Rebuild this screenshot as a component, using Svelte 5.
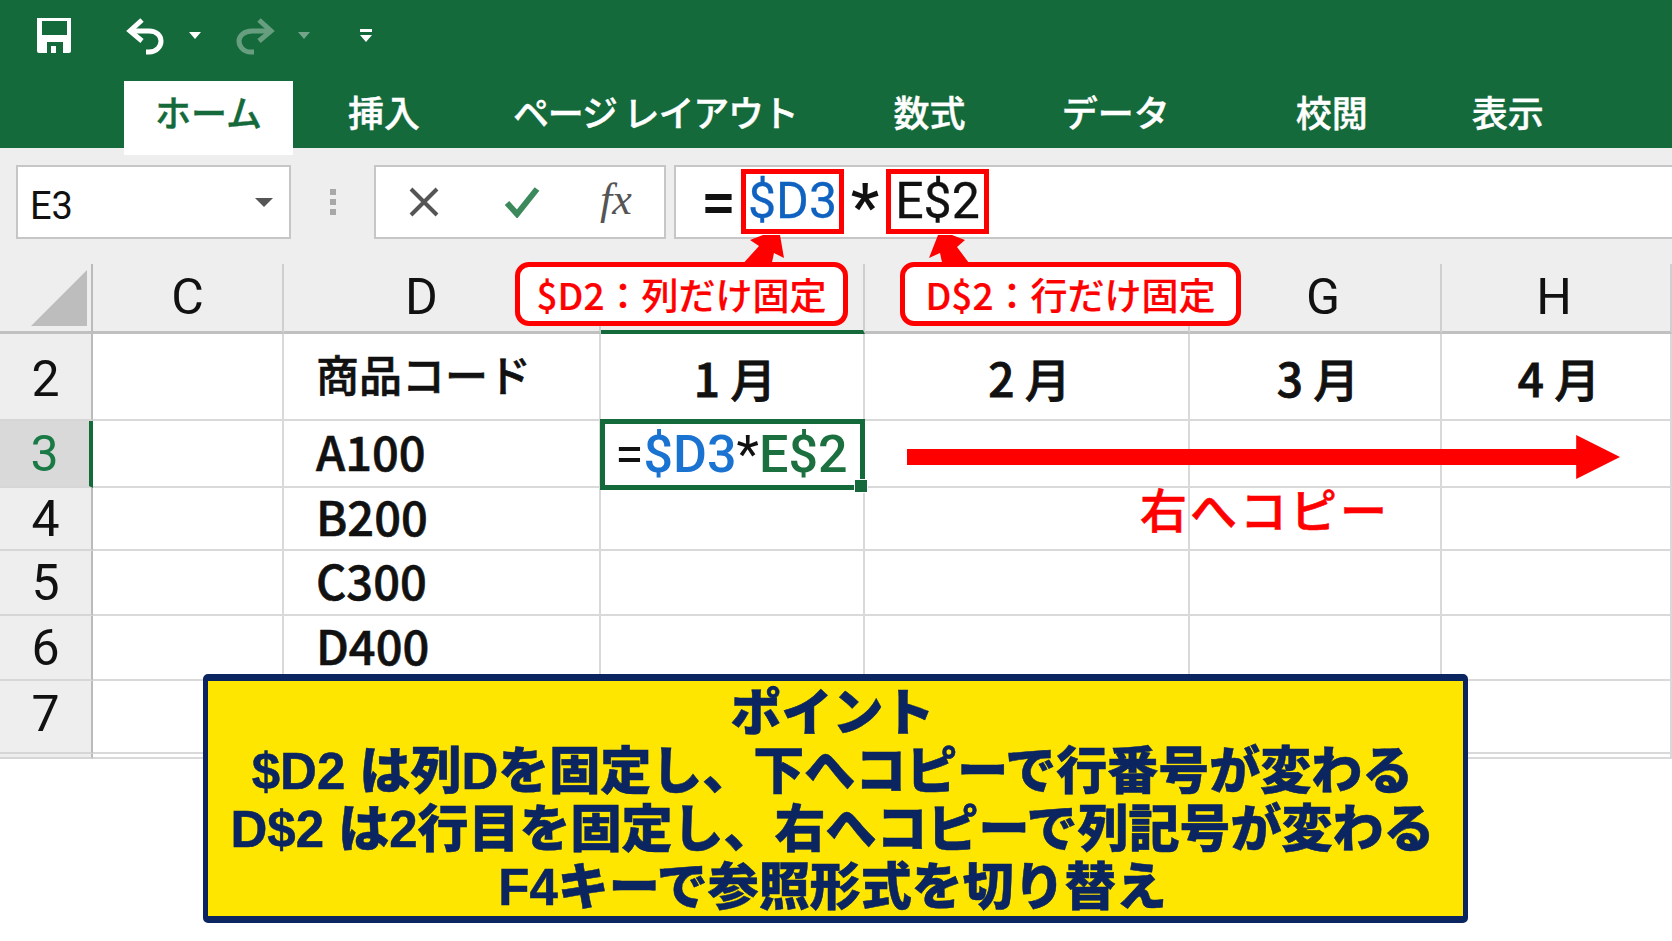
<script lang="ts">
  const tabs = [
    { label: 'ホーム', gap: 0, active: true, ls: 0 },
    { label: '挿入', gap: 55, ls: 0 },
    { label: 'ページ レイアウト', gap: 93, ls: -1.2 },
    { label: '数式', gap: 96, ls: 0 },
    { label: 'データ', gap: 96, ls: 0 },
    { label: '校閲', gap: 126, ls: 0 },
    { label: '表示', gap: 104, ls: 0 },
  ]
  const cols = [
    { label: 'C', shift: 0 },
    { label: 'D', shift: -40 },
    { label: '', shift: 0 },
    { label: '', shift: 0 },
    { label: 'G', shift: 16 },
    { label: 'H', shift: -4 },
  ]
  const rows = [
    { n: 2, code: '商品コード', months: ['1 月', '2 月', '3 月', '4 月'] },
    { n: 3, code: 'A100' },
    { n: 4, code: 'B200' },
    { n: 5, code: 'C300' },
    { n: 6, code: 'D400' },
    { n: 7, code: '' },
    { n: 0, code: '' },
  ]
</script>

<div class="app">
  <div class="ribbon">
    <div class="qat">
      <svg class="save" viewBox="0 0 36 37" width="36" height="37">
        <path fill="#fff" fill-rule="evenodd" d="M1 1h34v33a2 2 0 0 1-2 2H3a2 2 0 0 1-2-2zM6 4v14h25V4zM11 36V25h16v11h-7V29h-5v7z" />
      </svg>
      <svg class="undo" viewBox="0 0 40 38" width="40" height="38" fill="none" stroke="#fff" stroke-width="5">
        <path d="M16 3 4 14l12 10" />
        <path d="M5 14h18c8 0 12 5 12 10s-4 11-12 11h-3" />
      </svg>
      <span class="caret"></span>
      <svg class="redo" viewBox="0 0 40 38" width="40" height="38" fill="none" stroke="#fff" stroke-width="5" opacity=".35">
        <path d="M24 3l12 11-12 10" />
        <path d="M35 14H17C9 14 4 19 4 24s4 11 12 11h3" />
      </svg>
      <span class="caret dim"></span>
      <span class="custom"><i></i><span class="caret"></span></span>
    </div>
    <div class="tabs">
      {#each tabs as t}
        <div class="tab" class:active={t.active} style="margin-left:{t.gap}px; letter-spacing:{t.ls}px">{t.label}</div>
      {/each}
    </div>
  </div>

  <div class="fbar">
    <div class="namebox"><span>E3</span><span class="nb-caret"></span></div>
    <div class="dots"><i></i><i></i><i></i></div>
    <div class="btns">
      <svg viewBox="0 0 32 32" width="32" height="32" fill="none" stroke="#555" stroke-width="4"><path d="M3 3l26 26M29 3 3 29" /></svg>
      <svg viewBox="0 0 36 32" width="36" height="32" fill="none" stroke="#3c8a5c" stroke-width="6"><path d="M3 17l10 11L33 3" /></svg>
      <span class="fx">fx</span>
    </div>
    <div class="formula">
      <span class="eq">=</span>
      <span class="ref blue">$D3</span>
      <span class="star">*</span>
      <span class="ref">E$2</span>
    </div>
  </div>

  <div class="sheet">
    <div class="grid">
      <div class="corner"><svg viewBox="0 0 56 56" width="56" height="56"><path fill="#bdbdbd" d="M56 0v56H0z" /></svg></div>
      {#each cols as c, i}
        <div class="colhead" class:sel={i === 2}><span style="margin-left:{c.shift}px">{c.label}</span></div>
      {/each}
      {#each rows as r}
        <div class="rowhead" class:sel={r.n === 3} class:low={r.n === 2} class:high={r.n === 7}>{r.n || ''}</div>
        <div class="cell"></div>
        <div class="cell code" class:jp={r.n === 2}>{r.code}</div>
        {#if r.months}
          {#each r.months as m}
            <div class="cell month">{m}</div>
          {/each}
        {:else if r.n === 3}
          <div class="cell active-cell">
            <span>=<b class="b">$D3</b>*<b class="g">E$2</b></span>
            <i class="handle"></i>
          </div>
          <div class="cell"></div><div class="cell"></div><div class="cell"></div>
        {:else}
          <div class="cell"></div><div class="cell"></div><div class="cell"></div><div class="cell"></div>
        {/if}
      {/each}
    </div>

    <div class="callout c1">
      <svg viewBox="0 0 46 32" width="46" height="32"><path fill="#f00" d="M23 0h17l4 23-10-5-3 14H0l19-21L10 5z" /></svg>
      $D2：列だけ固定
    </div>
    <div class="callout c2">
      <svg viewBox="0 0 52 32" width="52" height="32"><path fill="#f00" d="M18 0h14l13 5-8 7 15 20H23l-3-14-11 5z" /></svg>
      D$2：行だけ固定
    </div>

    <svg class="arrow" viewBox="0 0 716 44" width="713" height="44"><path fill="#f00" d="M0 14h672V0l44 22-44 22V30H0z" /></svg>
    <div class="copy">右へコピー</div>

    <div class="point">
      <div>ポイント</div>
      <div>$D2 は列Dを固定し、下へコピーで行番号が変わる</div>
      <div>D$2 は2行目を固定し、右へコピーで列記号が変わる</div>
      <div>F4キーで参照形式を切り替え</div>
    </div>
  </div>
</div>

<style>
  :global(body) { margin: 0; background: #fff; }
  .app {
    width: 1672px;
    height: 941px;
    overflow: hidden;
    background: #fff;
    font-family: 'Noto Sans CJK JP', 'Liberation Sans', sans-serif;
    color: #111;
  }

  /* ribbon */
  .ribbon { background: #156a3b; height: 148px; }
  .qat { display: flex; align-items: center; height: 81px; padding-left: 36px; padding-bottom: 10px; box-sizing: border-box; }
  .undo { margin-left: 54px; }
  .redo { margin-left: 34px; }
  .caret { width: 0; height: 0; border: 6px solid transparent; border-top: 7px solid #fff; border-bottom: 0; margin-left: 23px; }
  .caret.dim { opacity: .4; margin-left: 23px; }
  .custom { display: flex; flex-direction: column; align-items: center; gap: 3px; margin-left: 50px; }
  .custom i { width: 12px; height: 3px; background: #fff; }
  .custom .caret { margin-left: 0; }
  .tabs { display: flex; padding-left: 124px; height: 74px; }
  .tab { color: #fff; font-size: 36px; font-weight: 500; line-height: 61px; white-space: nowrap; height: 67px; -webkit-text-stroke: .4px currentColor; }
  .tab.active { background: #fff; color: #156a3b; width: 169px; height: 74px; text-align: center; position: relative; box-sizing: border-box; }

  /* formula bar */
  .fbar { display: flex; background: #eeeeee; height: 116px; padding: 17px 0 0 16px; box-sizing: border-box; align-items: flex-start; }
  .namebox { width: 275px; height: 74px; background: #fff; border: 2px solid #c6c6c6; box-sizing: border-box; display: flex; align-items: center; justify-content: space-between; padding: 8px 16px 0 12px; font-size: 38px; font-family: Roboto, sans-serif; }
  .nb-caret { width: 0; height: 0; border: 9px solid transparent; border-top: 9px solid #555; border-bottom: 0; margin-bottom: 8px; }
  .dots { width: 83px; display: flex; flex-direction: column; align-items: center; gap: 4px; padding-top: 24px; }
  .dots i { width: 6px; height: 6px; background: #a8a8a8; }
  .btns { width: 292px; height: 74px; background: #fff; border: 2px solid #c6c6c6; box-sizing: border-box; display: flex; align-items: center; padding-left: 32px; gap: 64px; }
  .fx { font-family: 'Liberation Serif', serif; font-style: italic; font-size: 44px; color: #555; margin-left: -4px; margin-top: -6px; }
  .formula { flex: 1; height: 74px; margin-left: 8px; background: #fff; border: 2px solid #c6c6c6; border-right: 0; box-sizing: border-box; display: flex; align-items: center; padding-left: 27px; font-family: Roboto, sans-serif; }
  .eq { font-size: 62px; width: 38px; font-weight: 500; margin-left: -2px; margin-right: 2px; }
  .ref { border: 5px solid #f00; width: 103px; height: 65px; box-sizing: border-box; font-size: 50px; display: flex; align-items: center; justify-content: center; margin-top: -2px; -webkit-text-stroke: .3px currentColor; }
  .ref.blue { color: #0f62c0; }
  .star { font-size: 64px; font-weight: 500; width: 42px; text-align: center; margin-top: 12px; line-height: 1; }

  /* sheet */
  .sheet { position: relative; }
  .grid {
    display: grid;
    grid-template-columns: 93px 191px 317px 264px 325px 252px 230px;
    grid-template-rows: 70px 87px 67px 63px 65px 65px 73px 5px;
  }
  .corner { background: #eee; border-right: 2px solid #bbb; border-bottom: 3px solid #c0c0c0; box-sizing: border-box; display: flex; align-items: flex-end; justify-content: flex-end; padding: 0 4px 5px 0; }
  .colhead { background: #eee; border-right: 2px solid #cfcfcf; border-bottom: 3px solid #c0c0c0; box-sizing: border-box; text-align: center; font-size: 50px; line-height: 66px; font-family: Roboto, sans-serif; }
  .colhead.sel { border-bottom: 4px solid #156a3b; }
  .rowhead { background: #eee; border-right: 2px solid #bbb; border-bottom: 2px solid #d6d6d6; box-sizing: border-box; text-align: center; font-size: 50px; font-family: Roboto, sans-serif; display: flex; align-items: center; justify-content: center; overflow: hidden; }
  .rowhead.sel { background: #d9d9d9; color: #1a7a45; border-right: 4px solid #156a3b; }
  .rowhead.low { padding-top: 5px; }
  .rowhead.high { padding-bottom: 6px; }
  .cell { background: #fff; border-right: 2px solid #d9d9d9; border-bottom: 2px solid #d9d9d9; box-sizing: border-box; }
  .code { font-size: 47px; font-weight: 500; display: flex; align-items: center; padding: 0 0 6px 32px; line-height: 1; white-space: nowrap; -webkit-text-stroke: .6px currentColor; }
  .code.jp { font-size: 43px; }
  .month { font-size: 46px; font-weight: 500; display: flex; align-items: center; justify-content: center; white-space: pre; -webkit-text-stroke: .8px currentColor; padding-left: 6px; }
  .active-cell { position: relative; border: 5px solid #156a3b; margin: -2px 0 -2px -1px; font-family: Roboto, sans-serif; font-size: 52px; display: flex; align-items: center; padding-left: 10px; white-space: nowrap; }
  .active-cell b { font-weight: 500; }
  .b { color: #1a73d0; }
  .g { color: #1c7040; }
  .handle { position: absolute; right: -8px; bottom: -8px; width: 12px; height: 12px; background: #156a3b; border: 1px solid #fff; }

  .callout {
    position: absolute;
    top: -2px;
    height: 64px;
    box-sizing: border-box;
    border: 5px solid #f00;
    border-radius: 14px;
    background: #fff;
    color: #f00;
    font-size: 37px;
    font-weight: 500;
    display: flex;
    align-items: center;
    justify-content: center;
    white-space: nowrap;
    -webkit-text-stroke: .2px currentColor;
  }
  .callout svg { position: absolute; top: -32px; }
  .c1 { left: 515px; width: 333px; }
  .c1 svg { left: 220px; }
  .c2 { left: 900px; width: 341px; }
  .c2 svg { left: 15px; }

  .arrow { position: absolute; left: 907px; top: 171px; }
  .copy { position: absolute; left: 1140px; top: 208px; color: #f00; font-size: 47px; line-height: 72px; font-weight: 500; letter-spacing: 3px; -webkit-text-stroke: .6px currentColor; }

  .point {
    position: absolute;
    left: 203px;
    top: 410px;
    width: 1265px;
    height: 249px;
    box-sizing: border-box;
    background: #ffe600;
    border: 5px solid #0b2560;
    border-width: 7px 5px;
    border-radius: 5px;
    color: #0b2560;
    text-align: center;
    font-family: 'Liberation Sans', 'Noto Sans CJK JP', sans-serif;
    font-size: 51px;
    font-weight: 900;
    line-height: 58px;
    white-space: nowrap;
    -webkit-text-stroke: .5px currentColor;
    padding-right: 6px;
  }
  .point div:first-child { margin-top: 4px; }
</style>
